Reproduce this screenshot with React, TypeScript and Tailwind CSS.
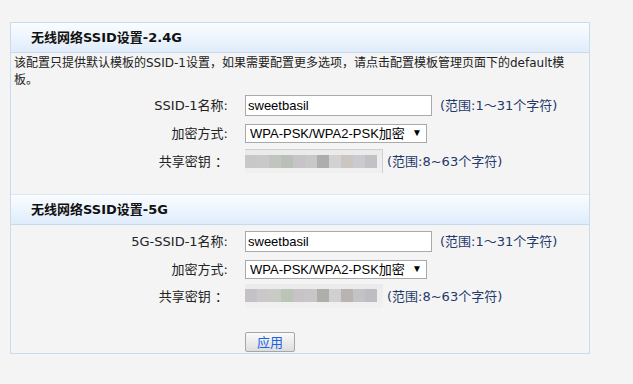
import React from "react";

const latin = { fontFamily: '"DejaVu Sans", "Noto Sans CJK SC", sans-serif' };
const arial = { fontFamily: '"Liberation Sans", "Noto Sans CJK SC", sans-serif' };

const mosaicA = ["#c8c8ca", "#c9c9c9", "#c2c4be", "#b9c0b7", "#c6c4c7", "#c8c8c8", "#adadad", "#d2d2d4", "#cbc6c2", "#cbcbcf", "#c2c2c6"];
const mosaicB = ["#c4c2c6", "#cac8c8", "#c9ccc6", "#bcc4b8", "#c8c4c6", "#c8c6c8", "#b0aeab", "#d0d0d2", "#b9b4b0", "#c3c3c7", "#bdbdc3"];

const SectionHeader: React.FC<{ title: string; top?: boolean }> = ({ title, top }) => (
  <div
    className={`flex items-center pl-[20px] bg-gradient-to-b from-[#fbfdff] to-[#dfecfb] border-b border-[#c6daee] ${
      top ? "h-[31px] border-t border-t-[#dbe7f3]" : "h-[30px]"
    }`}
  >
    <h2 className="text-[13px] leading-none font-bold text-[#111]" style={latin}>
      {title}
    </h2>
  </div>
);

const Row: React.FC<{ label: string; children: React.ReactNode; className: string }> = ({
  label,
  children,
  className,
}) => (
  <div className={`flex items-center ${className}`}>
    <div className="w-[222px] text-right pr-[5px] text-[13px] leading-none text-[#222]" style={latin}>
      {label}
    </div>
    <div className="ml-[12px] flex items-center h-full">{children}</div>
  </div>
);

const Range: React.FC<{ text: string; className?: string }> = ({ text, className }) => (
  <span className={`text-[13px] leading-none text-[#24386a] ${className ?? ""}`} style={latin}>
    {text}
  </span>
);

const TextBox: React.FC<{ value: string }> = ({ value }) => (
  <input
    readOnly
    value={value}
    className="w-[187px] h-[21px] bg-white border border-[#a9a9a9] px-[2px] text-[13px] text-black outline-none"
    style={arial}
  />
);

const Select: React.FC = () => (
  <div className="relative flex">
    <select
      className="appearance-none w-[182px] h-[19px] bg-white border border-[#a9a9a9] pl-[4px] text-[13px] leading-none text-black outline-none"
      style={arial}
      defaultValue="wpa"
    >
      <option value="wpa">WPA-PSK/WPA2-PSK加密</option>
    </select>
    <span className="absolute right-[5px] top-[3px] text-[10px] leading-none text-black pointer-events-none">▼</span>
  </div>
);

const Blurred: React.FC<{ colors: string[]; edge?: boolean }> = ({ colors, edge }) => (
  <div
    className={`w-[138px] h-[24px] flex flex-col bg-[#eeeeee] ${edge ? "border-t border-r border-[#d0d0d0]" : ""}`}
  >
    <div className="h-[5px] bg-[#ebebeb]" />
    <div className="flex h-[13px]">
      {colors.map((c, i) => (
        <div key={i} className="w-[12px] h-full" style={{ backgroundColor: c }} />
      ))}
    </div>
    <div className="flex-1 bg-[#f0f0f0]" />
  </div>
);

export default function App() {
  return (
    <div className="min-h-screen w-full bg-[#f4f4f4] pt-[22px] pl-[10px]">
      <div className="w-[580px] border border-[#c9dcef] bg-[#f4f4f4]">
        <SectionHeader title="无线网络SSID设置-2.4G" />
        <p className="h-[36px] px-[3px] pt-[2px] text-[12px] leading-[17px] text-[#222] pr-[12px]" style={latin}>
          该配置只提供默认模板的SSID-1设置，如果需要配置更多选项，请点击配置模板管理页面下的default模板。
        </p>

        <Row label="SSID-1名称:" className="mt-[6px] h-[21px]">
          <TextBox value="sweetbasil" />
          <Range text="(范围:1～31个字符)" className="ml-[8px]" />
        </Row>
        <Row label="加密方式:" className="mt-[8px] h-[19px]">
          <Select />
        </Row>
        <Row label="共享密钥 ：" className="mt-[6px] h-[24px]">
          <Blurred colors={mosaicA} edge />
          <Range text="(范围:8~63个字符)" className="ml-[4px]" />
        </Row>

        <div className="mt-[21px]">
          <SectionHeader title="无线网络SSID设置-5G" top />
        </div>

        <Row label="5G-SSID-1名称:" className="mt-[6px] h-[21px]">
          <TextBox value="sweetbasil" />
          <Range text="(范围:1～31个字符)" className="ml-[8px]" />
        </Row>
        <Row label="加密方式:" className="mt-[8px] h-[19px]">
          <Select />
        </Row>
        <Row label="共享密钥 ：" className="mt-[5px] h-[24px]">
          <Blurred colors={mosaicB} />
          <Range text="(范围:8~63个字符)" className="ml-[4px]" />
        </Row>

        <div className="pl-[234px] mt-[24px] pb-[1px] flex">
          <button
            className="w-[50px] h-[20px] border border-[#a6a6a6] rounded-[2px] bg-gradient-to-b from-[#fafafa] to-[#dedede] text-[13px] leading-none text-[#1a63e6]"
            style={latin}
          >
            应用
          </button>
        </div>
      </div>
    </div>
  );
}
